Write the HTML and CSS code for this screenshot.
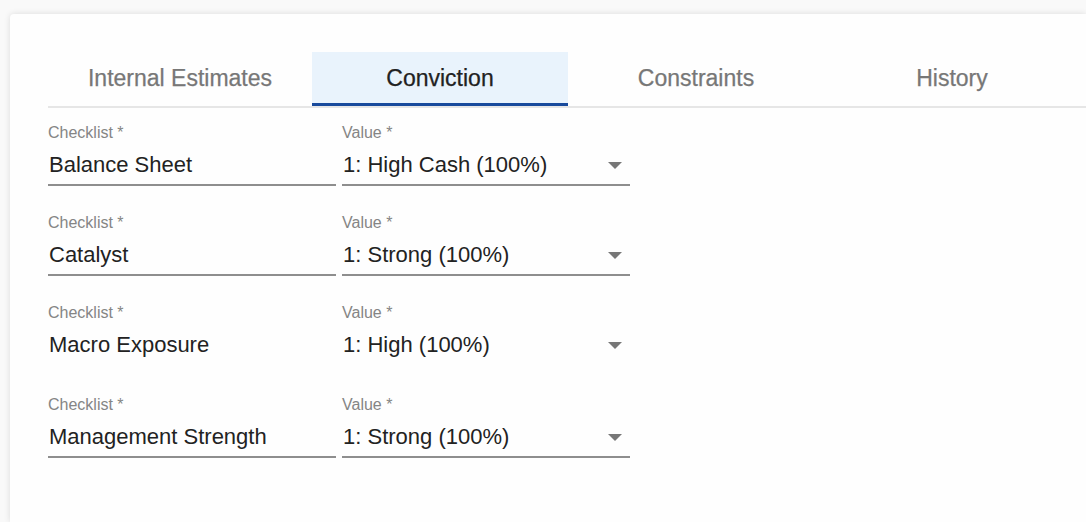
FILE: index.html
```html
<!DOCTYPE html>
<html lang="en">
<head>
  <meta charset="UTF-8" />
  <meta name="viewport" content="width=device-width, initial-scale=1.0"/>
  <title>Conviction Checklist</title>
  <link rel="stylesheet" href="styles.css">
</head>

<body>
  <div class="card">
    <div class="tabs">
      <div class="tab">Internal Estimates</div>
      <div class="tab active">Conviction</div>
      <div class="tab">Constraints</div>
      <div class="tab">History</div>
    </div>

    <div class="checklist">
      <div class="row">
        <div class="field">
          <label>Checklist *</label>
          <div class="field-value">Balance Sheet</div>
        </div>
        <div class="field">
          <label>Value *</label>
          <div class="field-value select">1: High Cash (100%)<span class="arrow"></span></div>
        </div>
      </div>

      <div class="row">
        <div class="field">
          <label>Checklist *</label>
          <div class="field-value">Catalyst</div>
        </div>
        <div class="field">
          <label>Value *</label>
          <div class="field-value select">1: Strong (100%)<span class="arrow"></span></div>
        </div>
      </div>

      <div class="row no-line">
        <div class="field">
          <label>Checklist *</label>
          <div class="field-value">Macro Exposure</div>
        </div>
        <div class="field">
          <label>Value *</label>
          <div class="field-value select">1: High (100%)<span class="arrow"></span></div>
        </div>
      </div>

      <div class="row">
        <div class="field">
          <label>Checklist *</label>
          <div class="field-value">Management Strength</div>
        </div>
        <div class="field">
          <label>Value *</label>
          <div class="field-value select">1: Strong (100%)<span class="arrow"></span></div>
        </div>
      </div>
    </div>
  </div>
</body>
</html>
```

FILE: styles.css
```css
* {
  box-sizing: border-box;
}

html,
body {
  height: 100%;
}

body {
  margin: 0;
  padding: 14px 0 0 10px;
  font-family: 'Liberation Sans', Arial, sans-serif;
  background: #f9f9f9;
  color: #222;
  overflow: hidden;
}

/* the card keeps going past the right and bottom of the view */
.card {
  height: 100%;
  padding: 38px 0 0 38px;
  background: #fefefe;
  border-radius: 4px 0 0 0;
  box-shadow: 0 0 6px rgba(0, 0, 0, 0.12);
}

.tabs {
  display: flex;
  border-bottom: 2px solid #e6e6e6;
}

.tab {
  flex: 0 0 256px;
  height: 54px;
  padding-top: 2px;
  display: flex;
  align-items: center;
  justify-content: center;
  font-size: 23px;
  color: #777;
  -webkit-text-stroke: 0.25px currentColor;
  border-bottom: 3px solid transparent;
}

.tab:first-child {
  flex-basis: 264px;
}

.tab.active {
  background: #e9f3fc;
  color: #222;
  border-bottom-color: #184a9c;
}

.checklist {
  padding-top: 15px;
}

.row {
  display: flex;
  gap: 6px;
  margin-bottom: 27px;
}

.row.no-line {
  margin-bottom: 29px;
}

.field {
  width: 288px;
}

.field label {
  display: block;
  font-size: 16px;
  line-height: 20px;
  color: #858585;
}

.field-value {
  margin-top: 8px;
  padding: 0 0 5px 1px;
  font-size: 22px;
  line-height: 28px;
  color: #222;
  border-bottom: 2px solid #8e8e8e;
}

.no-line .field-value {
  border-bottom-color: transparent;
}

.select {
  display: flex;
  align-items: center;
  justify-content: space-between;
}

.arrow {
  width: 0;
  height: 0;
  margin-right: 8px;
  border-left: 7px solid transparent;
  border-right: 7px solid transparent;
  border-top: 7px solid #777;
}
```
